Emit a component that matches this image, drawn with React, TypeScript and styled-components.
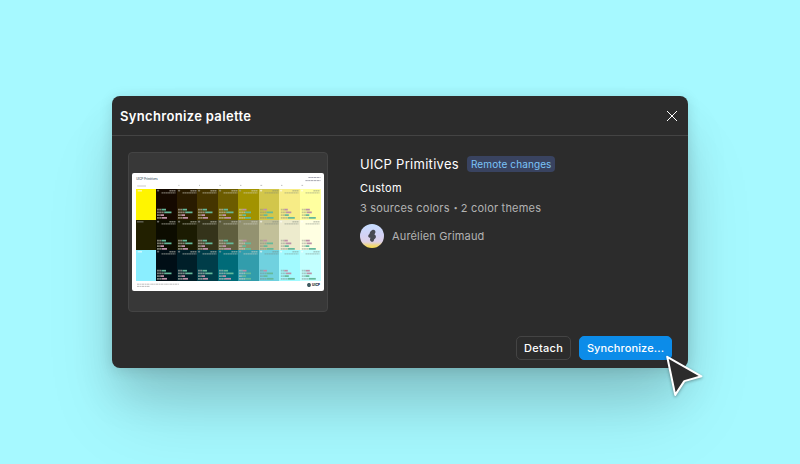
import React from "react";
import styled, { createGlobalStyle } from "styled-components";

const GlobalStyle = createGlobalStyle`
  * { box-sizing: border-box; }
  body { margin: 0; overflow: hidden; background: #a6f9ff; }
`;

const Stage = styled.main`
  position: relative;
  width: 800px;
  height: 464px;
  display: flex;
  align-items: center;
  justify-content: center;
  background: #a6f9ff;
  font-family: Inter, sans-serif;
  font-size: 11px;
  letter-spacing: 0.32px;
  color: #fff;
`;

const Dialog = styled.section`
  width: 576px;
  height: 272px;
  display: flex;
  flex-direction: column;
  background: #2c2c2c;
  border-radius: 8px;
  box-shadow: 0 2px 14px rgba(0, 0, 0, 0.12), 0 28px 44px -2px rgba(0, 0, 0, 0.12), 0 52px 72px -10px rgba(0, 0, 0, 0.13);
`;

const Header = styled.header`
  height: 40px;
  flex: none;
  display: flex;
  align-items: center;
  justify-content: space-between;
  padding: 0 8px;
  border-bottom: 1px solid #444;
`;

const Title = styled.h1`
  margin: 1px 0 0;
  font-size: 13px;
  line-height: 16px;
  font-weight: 600;
  letter-spacing: 0.33px;
`;

const CloseButton = styled.button`
  width: 16px;
  height: 16px;
  padding: 0;
  border: 0;
  background: none;
  color: #fff;
  display: grid;
  place-items: center;
`;

const Body = styled.div`
  flex: 1;
  display: flex;
  gap: 32px;
  padding: 16px 16px 0;
`;

const Preview = styled.div`
  width: 200px;
  height: 160px;
  display: grid;
  place-items: center;
  background: #383838;
  border: 1px solid #444;
  border-radius: 4px;
`;

const Sheet = styled.div`
  width: 192px;
  height: 118px;
  display: flex;
  flex-direction: column;
  background: #fff;
  border-radius: 2px;
  padding: 0 3.4px 0 3.6px;
  overflow: hidden;
`;

const SheetHead = styled.div`
  height: 16px;
  flex: none;
  display: flex;
  justify-content: space-between;
`;

const SheetTitle = styled.div`
  width: 24px;
  flex: none;
  display: flex;
  flex-direction: column;
`;

const SheetName = styled.span`
  padding: 3.5px 0 0 0.6px;
  font-size: 3px;
  line-height: 4px;
  font-weight: 500;
  letter-spacing: -0.05px;
  white-space: nowrap;
  color: #456;
`;

const Swatches = styled.div`
  height: 92px;
  flex: none;
  display: grid;
  grid-template-columns: repeat(9, 1fr);
  grid-template-rows: repeat(3, 1fr);
`;

const Swatch = styled.div<{ $color: string }>`
  display: flex;
  background: ${(p) => p.$color};
  overflow: hidden;
`;

const SheetFoot = styled.div`
  flex: 1;
  display: flex;
  justify-content: space-between;
`;

const Brand = styled.span`
  display: flex;
  align-items: center;
  gap: 1px;
  margin: 0 0.6px 2px 0;
  font-size: 3.3px;
  line-height: 4px;
  font-weight: 800;
  letter-spacing: 0;
  color: #123;
`;

const Details = styled.div`
  display: flex;
  flex-direction: column;
`;

const NameRow = styled.div`
  height: 16px;
  display: flex;
  align-items: center;
  gap: 8px;
  margin-top: 4px;
`;

const Name = styled.h2`
  margin: 0;
  font-size: 13px;
  line-height: 16px;
  font-weight: 400;
  letter-spacing: 0.29px;
`;

const Tag = styled.span`
  width: 88px;
  height: 16px;
  padding: 0 4px;
  border-radius: 4px;
  background: #394360;
  color: #7cc4f8;
  font-size: 10px;
  line-height: 16px;
  letter-spacing: 0.1px;
  white-space: nowrap;
`;

const Line = styled.p<{ $muted?: boolean; $gap: number }>`
  margin: ${(p) => p.$gap}px 0 0;
  line-height: 16px;
  letter-spacing: ${(p) => (p.$muted ? 0.2 : 0.32)}px;
  color: ${(p) => (p.$muted ? "#b3b3b3" : "#fff")};
`;

const Separator = styled.span`
  font-weight: 700;
`;

const Author = styled.div`
  display: flex;
  align-items: center;
  gap: 8px;
  margin-top: 8px;
  line-height: 24px;
  letter-spacing: 0.15px;
  color: #b3b3b3;
`;

const Avatar = styled.div`
  width: 24px;
  height: 24px;
  border-radius: 50%;
  display: grid;
  place-items: center;
  background: linear-gradient(#c5ddff 0%, #d3d2f5 45%, #dfd1e6 75%, #f1d777 90%, #f6da4e 100%);
`;

const Footer = styled.footer`
  display: flex;
  justify-content: flex-end;
  gap: 8px;
  padding: 0 16px 8px;
`;

const Button = styled.button<{ $primary?: boolean; $width: number }>`
  width: ${(p) => p.$width}px;
  height: 24px;
  padding: 0;
  border: 1px solid ${(p) => (p.$primary ? "#0c8ce9" : "#444")};
  border-radius: 5px;
  background: ${(p) => (p.$primary ? "#0c8ce9" : "transparent")};
  color: #fff;
  font: 500 11px/22px Inter, sans-serif;
  letter-spacing: ${(p) => (p.$primary ? 0.12 : 0.3)}px;
`;

const Pointer = styled.svg`
  position: absolute;
  left: 660px;
  top: 350px;
  filter: drop-shadow(0 1px 1.5px rgba(0, 0, 0, 0.35));
`;

const rows = [
  ["#fff500", "#150900", "#291b00", "#453500", "#6c5c00", "#a29300", "#d2c64b", "#f7ec86", "#ffff9f"],
  ["#222000", "#0c0c00", "#1b1b02", "#34331a", "#5f5e3e", "#939270", "#c2c099", "#edebcd", "#ffffe2"],
  ["#8aeeff", "#000e16", "#001f29", "#003d49", "#006b78", "#329dac", "#70d1df", "#a2faff", "#c2ffff"],
];

const markWidths = [
  [9, 14.5, 7, 10],
  [9, 14.5, 7, 10],
  [9, 14.5, 7, 10],
  [9, 14.5, 7, 12],
  [7.5, 12, 7, 12],
  [7, 13, 7.5, 13.5],
  [7, 10.5, 8, 14],
  [8, 10, 7.5, 14],
];

function SwatchMarks({ column }: { column: number }) {
  const light = column > 5;
  const ink = light ? "#78827a" : "#d5d5c8";
  return (
    <svg width="20.5" height="30.6" viewBox="0 0 20.5 30.6">
      <rect x="1" y="0.8" width="2.2" height="1.6" rx="0.6" fill={light ? "#fff" : "#aaa"} opacity="0.6" />
      <g stroke={ink} strokeDasharray="1.9 .3">
        <path d="M13.4 1.8H19.5" strokeWidth="1.4" opacity={light ? ".4" : ".5"} />
        <path d="M5.5 3.9H19.5" strokeWidth="1.4" opacity={light ? ".4" : ".5"} />
      </g>
      {markWidths[column - 1].map((w, i) => {
        const y = 20.7 + i * 2.7;
        const start = column > 6 ? 1.8 : 1;
        const pink = column < 5 ? i > 1 : i === 0 || (column > 6 && i === 1);
        const split = w * 0.5;
        return (
          <g key={i}>
            <path d={`M${start} ${y}H${start + split}`} stroke={ink} strokeWidth="1.8" strokeDasharray="1.9 .3" opacity={light ? ".42" : ".58"} />
            <path d={`M${start + split} ${y}H${start + w}`} stroke={pink ? "#bd91a8" : "#65b99a"} strokeWidth="1.7" />
          </g>
        );
      })}
    </svg>
  );
}

function PaletteSheet() {
  return (
    <Sheet>
      <SheetHead>
        <SheetTitle>
          <SheetName>UICP Primitives</SheetName>
          <svg width="12" height="8" viewBox="0 0 12 8">
            <path d="M1.2 5H10" stroke="#888" strokeWidth=".8" opacity=".55" />
          </svg>
        </SheetTitle>
        <svg width="150" height="16" viewBox="0 0 150 16">
          <g stroke="#778" strokeWidth=".9" strokeDasharray="2.4 .4" opacity=".7">
            <path d="M137.4 4.5H149.5M134.4 7.6H149.5" />
          </g>
          <path d="M7.4 12.4h1M28 12.4h1M48.4 12.4h1.4M69 12.4h1.4M89.4 12.4h1.8M110 12.4h1.4M130.5 12.4h1.6" stroke="#888" strokeWidth=".9" opacity=".6" />
        </svg>
      </SheetHead>
      <Swatches>
        {rows.map((row, r) =>
          row.map((color, c) => (
            <Swatch key={`${r}-${c}`} $color={color}>
              {c > 0 ? (
                <SwatchMarks column={c} />
              ) : (
                <svg width="20" height="10" viewBox="0 0 20 10">
                  <path d={r === 1 ? "M1 1.8H7.5" : "M1.7 1.8H6"} stroke={r === 1 ? "#888" : "#fff"} strokeWidth="1.5" opacity=".6" />
                </svg>
              )}
            </Swatch>
          )),
        )}
      </Swatches>
      <SheetFoot>
        <svg width="50" height="9" viewBox="0 0 50 9">
          <g stroke="#777" strokeWidth=".75" strokeDasharray="2.6 .5 1.2 .4" opacity=".65">
            <path d="M1 3.2H43M1 5.4H14" />
          </g>
        </svg>
        <Brand>
          <svg width="4" height="4" viewBox="0 0 4 4">
            <circle cx="2" cy="2" r="1.9" fill="#244047" />
            <path d="M1 2H3" stroke="#92aeb6" strokeWidth=".5" />
          </svg>
          UICP
        </Brand>
      </SheetFoot>
    </Sheet>
  );
}

export default function App() {
  return (
    <>
      <GlobalStyle />
      <Stage>
        <Dialog>
          <Header>
            <Title>Synchronize palette</Title>
            <CloseButton aria-label="Close">
              <svg width="12" height="12" viewBox="0 0 12 12" fill="none" stroke="currentColor">
                <path d="M1 1L11 11M11 1L1 11" />
              </svg>
            </CloseButton>
          </Header>
          <Body>
            <Preview>
              <PaletteSheet />
            </Preview>
            <Details>
              <NameRow>
                <Name>UICP Primitives</Name>
                <Tag>Remote changes</Tag>
              </NameRow>
              <Line $gap={8}>Custom</Line>
              <Line $gap={4} $muted>
                3 sources colors<Separator>・</Separator>2 color themes
              </Line>
              <Author>
                <Avatar>
                  <svg width="24" height="24" viewBox="0 0 24 24">
                    <path d="M12 6.2C13.8 5.1 15.8 6.3 15.4 8.4L14.4 10.6C16.7 11.6 16.2 14.6 14.2 15.2C14 17.6 12.3 18.5 10.8 17.3C9.7 16.4 9.9 15 10.5 13.8C7.8 13.9 7.6 11.2 9.5 10C9.8 8.9 10.2 7.1 12 6.2Z" fill="#484a52" />
                  </svg>
                </Avatar>
                Aurélien Grimaud
              </Author>
            </Details>
          </Body>
          <Footer>
            <Button $width={55}>Detach</Button>
            <Button $primary $width={93}>Synchronize...</Button>
          </Footer>
        </Dialog>
        <Pointer width="50" height="54" viewBox="0 0 50 54">
          <path d="M7.2 6.8L41.4 26.3L24.3 31.1L15.2 44.9Z" fill="#2c2c2c" stroke="#fff" strokeWidth="2" strokeLinejoin="round" />
        </Pointer>
      </Stage>
    </>
  );
}
